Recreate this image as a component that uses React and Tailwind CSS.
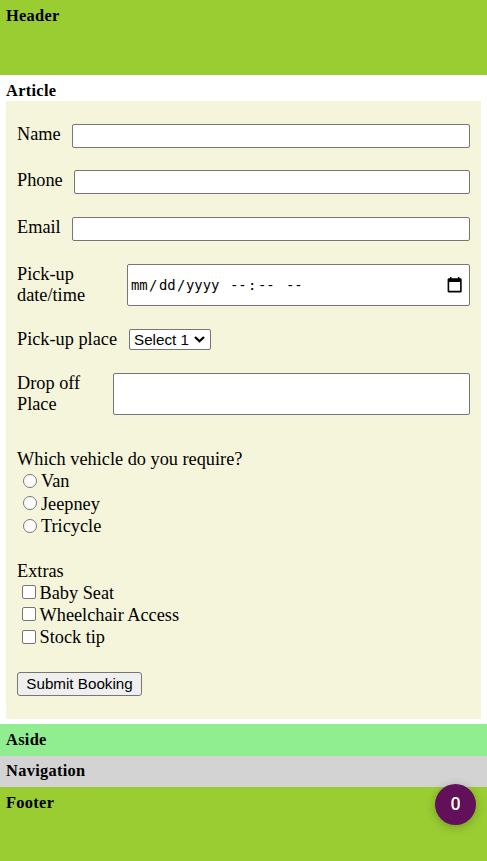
import React from "react";

const box = "block rounded-[2px] border border-[#767676] bg-white";

function Title({ children }) {
  return <h2 className="text-[16.4px] leading-5 font-bold tracking-[0.3px]">{children}</h2>;
}

function TextRow({ label, className, inputClass }) {
  return (
    <div className={`flex items-start justify-between ${className}`}>
      <label className="leading-[21px]">{label}</label>
      <input type="text" aria-label={label} className={`${box} ${inputClass}`} />
    </div>
  );
}

function Choice({ type, label, className, markClass }) {
  return (
    <label className={`flex items-start ${className}`}>
      <input
        type={type}
        className={`block size-3.5 shrink-0 appearance-none border border-[#767676] bg-white ${markClass}`}
      />
      <span className="leading-[21px]">{label}</span>
    </label>
  );
}

function DatePart({ children, className }) {
  return <span className={`block shrink-0 ${className}`}>{children}</span>;
}

export default function App() {
  return (
    <div className="h-[861px] w-full overflow-hidden bg-white font-['Liberation_Serif','Times_New_Roman',serif] text-black">
      <header className="h-[75px] bg-[#9acd32] px-1.5 pt-1.5">
        <Title>Header</Title>
      </header>

      <article className="h-[649px] px-1.5 pt-1.5">
        <Title>Article</Title>
        <form className="h-[618px] bg-[#f5f5dc] px-[11px] pt-[23px] text-[18.3px] leading-[21px]">
          <TextRow label="Name" className="h-[46px]" inputClass="h-6 w-[398px]" />
          <TextRow label="Phone" className="h-[47px]" inputClass="h-6 w-[396px]" />
          <TextRow label="Email" className="h-[47px]" inputClass="h-6 w-[398px]" />

          <div className="flex h-[65px] justify-between">
            <label className="leading-[21px]">
              Pick-up
              <br />
              date/time
            </label>
            <div
              className={`${box} flex! h-[42px] w-[343px] items-center pr-[7px] pl-[3px] font-['DejaVu_Sans_Mono',monospace] text-[13.9px] leading-[18px]`}
            >
              <DatePart className="w-[18px]">mm</DatePart>
              <DatePart className="w-[10px]">/</DatePart>
              <DatePart className="w-[18px]">dd</DatePart>
              <DatePart className="w-[9px]">/</DatePart>
              <DatePart className="w-[44px]">yyyy</DatePart>
              <DatePart className="w-[18px]">--</DatePart>
              <DatePart className="w-[10px]">:</DatePart>
              <DatePart className="w-[28px]">--</DatePart>
              <DatePart>--</DatePart>
              <svg viewBox="0 0 15 16" className="ml-auto h-4 w-[15px]" aria-hidden="true">
                <path
                  fill="#000"
                  fillRule="evenodd"
                  d="M3 0h1.500v1.300h6.400V0h1.500v1.300h1q1.300 0 1.300 1.300v11.600q0 1.300-1.300 1.300H2q-1.400 0-1.400-1.300V2.600Q.6 1.300 2 1.300h1zM2.200 5v8.800h10.900V5z"
                />
              </svg>
            </div>
          </div>

          <div className="flex h-11 items-start gap-3">
            <label className="w-[100px] leading-[21px] whitespace-nowrap">Pick-up place</label>
            <div className={`${box} flex! h-[21px] w-[82px] items-center pl-1 font-['Liberation_Sans',Arial,sans-serif] text-[15.2px] leading-[19px]`}>
              <span className="w-[60px]">Select 1</span>
              <svg viewBox="0 0 11 7" className="mb-px h-[7px] w-[11px]" aria-hidden="true">
                <path d="M1 1 5.500 5.300 10 1" fill="none" stroke="#000" strokeWidth="2.2" />
              </svg>
            </div>
          </div>

          <div className="flex h-[75px] justify-between">
            <label className="leading-[21px]">
              Drop off
              <br />
              Place
            </label>
            <textarea aria-label="Drop off Place" className={`${box} h-[42px] w-[357px] resize-none`} />
          </div>

          <div className="h-28 pt-px">
            <p className="leading-[21px]">Which vehicle do you require?</p>
            <Choice type="radio" label="Van" className="h-[23px] gap-1 pt-px pl-1.5" markClass="mt-[3px] rounded-full" />
            <Choice type="radio" label="Jeepney" className="h-[22px] gap-1 pt-px pl-1.5" markClass="mt-0.5 rounded-full" />
            <Choice type="radio" label="Tricycle" className="h-[22px] gap-1 pt-px pl-1.5" markClass="mt-[3px] rounded-full" />
          </div>

          <div className="h-28 pt-px">
            <p className="leading-[21px]">Extras</p>
            <Choice type="checkbox" label="Baby Seat" className="h-[22px] gap-[3.500px] pt-px pl-[5px]" markClass="mt-0.5 rounded-[2px]" />
            <Choice type="checkbox" label="Wheelchair Access" className="h-[22px] gap-[3.500px] pt-px pl-[5px]" markClass="mt-0.5 rounded-[2px]" />
            <Choice type="checkbox" label="Stock tip" className="h-[22px] gap-[3.500px] pt-px pl-[5px]" markClass="mt-[3px] rounded-[2px]" />
          </div>

          <button
            type="button"
            className="block h-6 w-[125px] rounded-[3px] border border-[#767676] bg-[#efefef] font-['Liberation_Sans',Arial,sans-serif] text-[15.2px] leading-[22px] whitespace-nowrap"
          >
            Submit Booking
          </button>
        </form>
      </article>

      <aside className="h-8 bg-[#90ee90] px-1.5 pt-1.5">
        <Title>Aside</Title>
      </aside>
      <nav className="h-[31px] bg-[#d3d3d3] px-1.5 pt-[5px]">
        <Title>Navigation</Title>
      </nav>
      <footer className="h-[74px] bg-[#9acd32] px-1.5 pt-1.5">
        <Title>Footer</Title>
      </footer>

      <div className="fixed right-[11px] bottom-9 flex size-[41px] items-center justify-center rounded-full bg-[#621059] pb-0.5 font-['Roboto',sans-serif] text-[18px] leading-none text-white shadow-[0_2px_10px_rgba(0,0,0,0.25)]">
        <span className="font-medium">0</span>
      </div>
    </div>
  );
}
